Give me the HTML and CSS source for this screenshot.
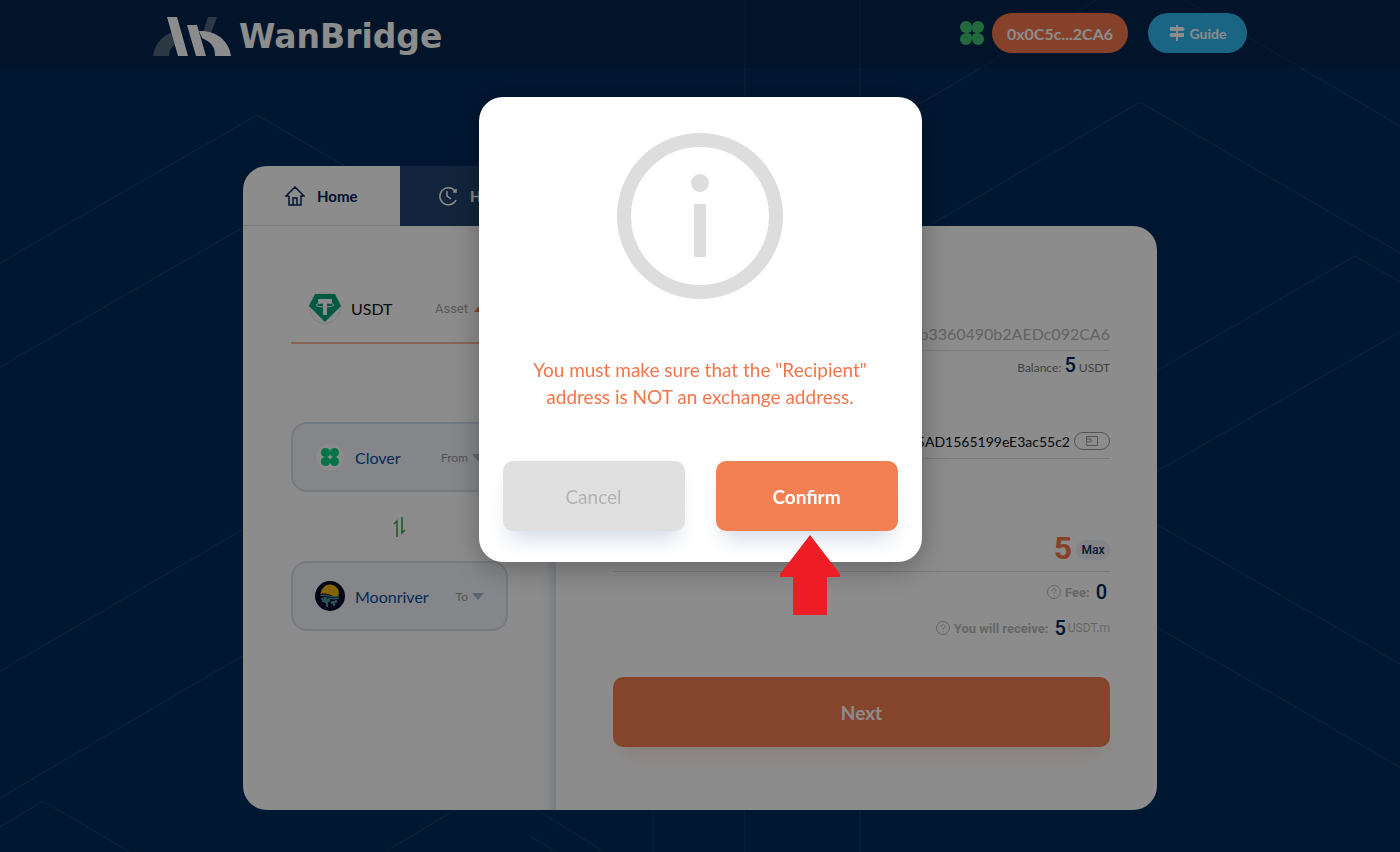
FILE: index.html
```html
<!DOCTYPE html>
<html lang="en">
<head>
    <meta charset="UTF-8">
    <meta name="viewport" content="width=device-width, initial-scale=1.0">
    <title>WanBridge</title>
    <link rel="stylesheet" href="styles.css">
</head>
<body>
    <svg class="bg-lines" viewBox="0 0 1400 852" preserveAspectRatio="xMidYMin slice" aria-hidden="true">
        <path d="M0 263L257 115L345 166M0 367L242 228M0 671L242 530M0 798L242 656M0 827L43 801L130 852M385 852L455 810M537 810L605 852M530 836L557 852"/>
        <path d="M653 810V852M745 0V97M745 810V852M860 0V97M860 810V852"/>
        <path d="M921 103L1097 0M1185 0L1400 126M925 228L1140 102L1400 253M1156 371L1355 256L1400 282M1156 472L1400 332M1156 524L1400 664M1156 627L1400 767"/>
    </svg>

    <header class="header">
        <div class="header-inner">
            <a class="logo" href="#">
                <svg width="80" height="42" viewBox="0 0 80 42" aria-hidden="true">
                    <path class="logo-dim" d="M0 41C2 27 12 18 24 16L28 27C20 29 16 34 16 41ZM55 2H64L56 24L49 21Z"/>
                    <path d="M14 2H24L35 41H25ZM34 10H44L53 41H43ZM46 16C62 15 76 25 78 41H62C62 33 60 28 49 23Z"/>
                </svg>
                <span>WanBridge</span>
            </a>
            <div class="header-right">
                <svg class="clover" width="24" height="24" viewBox="0 0 24 24" aria-hidden="true">
                    <path d="M6 6H18V18H6Z"/>
                    <circle cx="6" cy="6" r="6"/><circle cx="18" cy="6" r="6"/>
                    <circle cx="6" cy="18" r="6"/><circle cx="18" cy="18" r="6"/>
                    <path class="star" d="M12 8L13 11L16 12L13 13L12 16L11 13L8 12L11 11Z"/>
                </svg>
                <button class="pill wallet">0x0C5c...2CA6</button>
                <a class="pill guide" href="#">
                    <svg width="16" height="16" viewBox="0 0 16 16" aria-hidden="true">
                        <path d="M7 0H9V2H14L16 4L14 6H9V8H15V12H9V16H7V12H2L0 10L2 8H7V6H1V2H7Z"/>
                    </svg>
                    Guide
                </a>
            </div>
        </div>
    </header>

    <main class="bridge">
        <nav class="tabs">
            <button class="tab active">
                <svg width="20" height="20" viewBox="0 0 20 20" aria-hidden="true">
                    <path d="M4 10H1L10 1L19 10H16V19H4V10M8 19V12H12V19"/>
                </svg>
                Home
            </button>
            <button class="tab">
                <svg width="20" height="20" viewBox="0 0 20 20" aria-hidden="true">
                    <path d="M18 14A8.500 8.500 0 1 1 17 5M18 3V6H15M9 5V10L13 13"/>
                </svg>
                History
            </button>
        </nav>

        <div class="card">
            <section class="side">
                <button class="asset">
                    <svg width="32" height="32" viewBox="0 0 32 32" aria-hidden="true">
                        <circle cx="16" cy="16" r="15.500" fill="#fff" stroke="#e6e6e6"/>
                        <path d="M6 2H26L32 14L16 30L0 14Z" fill="#00a478"/>
                        <path d="M9 7H23V11H18V23H14V11H9Z" fill="#fff"/>
                        <ellipse cx="16" cy="13" rx="9" ry="2" fill="none" stroke="#fff"/>
                    </svg>
                    <span class="asset-name">USDT</span>
                    <span class="asset-hint">Asset</span>
                    <i class="caret up"></i>
                </button>

                <button class="chain">
                    <svg width="30" height="30" viewBox="0 0 30 30" aria-hidden="true">
                        <circle cx="15" cy="15" r="14.500" fill="#fff" stroke="#eee"/>
                        <g fill="#00d284">
                            <path d="M11 11H19V19H11Z"/>
                            <circle cx="10.500" cy="10.500" r="4.500"/><circle cx="19.500" cy="10.500" r="4.500"/>
                            <circle cx="10.500" cy="19.500" r="4.500"/><circle cx="19.500" cy="19.500" r="4.500"/>
                        </g>
                        <path d="M15 12L16 14L18 15L16 16L15 18L14 16L12 15L14 14Z" fill="#fff"/>
                    </svg>
                    <span class="chain-name">Clover</span>
                    <span class="chain-hint">From</span>
                    <i class="caret"></i>
                </button>

                <button class="swap" aria-label="Swap">
                    <svg width="14" height="22" viewBox="0 0 14 22" aria-hidden="true">
                        <path d="M4 21V5L1 8M9 1V17L12 14"/>
                    </svg>
                </button>

                <button class="chain">
                    <svg width="30" height="30" viewBox="0 0 30 30" aria-hidden="true">
                        <circle cx="15" cy="15" r="15" fill="#070a29"/>
                        <path d="M6 13A9 9 0 0 1 24 12C24 15 21 16 18 15C14 13 10 12 6 13Z" fill="#f2b707"/>
                        <path d="M6 15C12 12 16 18 24 15M6 18C12 14 16 20 24 17" fill="none" stroke="#53cbc9" stroke-width="1"/>
                        <path d="M8 18V21M10 17V22M12 18V26M14 18V21M17 20V23M19 20V25M21 19V22" stroke="#53cbc9" stroke-width="1.500"/>
                    </svg>
                    <span class="chain-name">Moonriver</span>
                    <span class="chain-hint">To</span>
                    <i class="caret"></i>
                </button>
            </section>

            <form class="form">
                <div class="row sender">7b3360490b2AEDc092CA6</div>
                <div class="balance">Balance: <b>5</b> USDT</div>
                <div class="row recipient">
                    <input type="text" aria-label="Recipient" value="5AD1565199eE3ac55c2">
                    <button type="button" class="paste" aria-label="Wallet">
                        <svg width="12" height="10" viewBox="0 0 12 10" aria-hidden="true">
                            <path d="M.5 .5H11.500V9.500H.5V7M.5 3H5V6H.5V.5"/>
                        </svg>
                    </button>
                </div>
                <div class="row amount">
                    <input type="text" aria-label="Amount" value="5">
                    <button type="button" class="max">Max</button>
                </div>
                <div class="info">
                    <svg width="14" height="14" viewBox="0 0 14 14" aria-hidden="true">
                        <circle cx="7" cy="7" r="6.500"/><path d="M5 6C5 3 9 3 9 5.500C9 7 7 7 7 8.500M7 10V11"/>
                    </svg>
                    <span>Fee:</span> <b>0</b>
                </div>
                <div class="info">
                    <svg width="14" height="14" viewBox="0 0 14 14" aria-hidden="true">
                        <circle cx="7" cy="7" r="6.500"/><path d="M5 6C5 3 9 3 9 5.500C9 7 7 7 7 8.500M7 10V11"/>
                    </svg>
                    <span>You will receive:</span> <b>5</b> <small>USDT.m</small>
                </div>
                <button type="button" class="next">Next</button>
            </form>
        </div>
    </main>

    <div class="overlay">
        <div class="modal" role="dialog" aria-modal="true" aria-labelledby="modal-text">
            <svg class="modal-icon" width="168" height="168" viewBox="0 0 168 168" aria-hidden="true">
                <circle cx="84" cy="84" r="76" fill="none" stroke="#ddd" stroke-width="14"/>
                <circle cx="84" cy="51" r="9" fill="#ddd"/>
                <rect x="78" y="72" width="12" height="53" rx="1" fill="#ddd"/>
            </svg>
            <p id="modal-text">You must make sure that the "Recipient" address is NOT an exchange address.</p>
            <div class="modal-buttons">
                <button class="cancel">Cancel</button>
                <div class="confirm-wrap">
                    <button class="confirm">Confirm</button>
                    <svg class="pointer" width="62" height="82" viewBox="0 0 62 82" aria-hidden="true">
                        <path d="M31 1L61 40V43H48V81H14V43H1V40Z"/>
                    </svg>
                </div>
            </div>
        </div>
    </div>
</body>
</html>
```

FILE: styles.css
```css
* {
    box-sizing: border-box;
}
body {
    margin: 0;
    min-height: 100vh;
    background-color: #002a5b;
    font-family: Lato, "Liberation Sans", sans-serif;
}
button, input {
    font-family: inherit;
    border: none;
    padding: 0;
    background: none;
}
a {
    text-decoration: none;
}
.bg-lines {
    position: absolute;
    top: 0;
    left: 0;
    width: 100%;
    height: 100%;
    fill: none;
    stroke: #214265;
    stroke-width: 1;
}

/* header */
.header {
    position: relative;
    height: 68px;
    padding: 0 20px;
    background-color: rgba(6, 34, 66, 0.5);
}
.header-inner {
    display: flex;
    justify-content: space-between;
    max-width: 1094px;
    margin: 0 auto;
    padding-top: 13px;
}
.logo {
    display: flex;
    align-items: center;
    gap: 6px;
    height: 46px;
    color: #fff;
    font: bold 33px "DejaVu Sans", sans-serif;
}
.logo svg {
    fill: #fff;
}
.logo .logo-dim {
    fill: #52667f;
}
.header-right {
    display: flex;
    align-items: center;
    height: 40px;
}
.clover {
    fill: #3ec271;
    margin-right: 8px;
}
.clover .star {
    fill: #02254c;
}
.pill {
    display: flex;
    align-items: center;
    justify-content: center;
    gap: 5px;
    height: 40px;
    border-radius: 20px;
    color: #fff;
    font-weight: bold;
}
.wallet {
    width: 136px;
    margin-right: 20px;
    background-color: #f3774b;
    font-size: 16px;
}
.guide {
    width: 99px;
    background-color: #31b8ef;
    font-size: 14px;
}
.guide svg {
    fill: #fff;
}

/* bridge card */
.bridge {
    position: relative;
    max-width: 914px;
    margin: 0 auto;
    padding: 98px 0 42px;
}
.tabs {
    display: flex;
}
.tab {
    display: flex;
    align-items: center;
    gap: 12px;
    width: 157px;
    height: 60px;
    padding-left: 38px;
    background-color: #20436c;
    color: #fff;
    font-size: 15px;
    font-weight: bold;
}
.tab.active {
    padding-left: 42px;
    border-radius: 24px 0 0 0;
    border-bottom: 1px solid #dcdcdc;
    background-color: #fff;
    color: #04235a;
}
.tab svg {
    fill: none;
    stroke: currentColor;
    stroke-width: 1.5;
}
.card {
    display: flex;
    min-height: 584px;
    border-radius: 0 24px 24px 24px;
    background-color: #fff;
    overflow: hidden;
}
.side {
    width: 313px;
    padding: 48px 48px 0;
    box-shadow: inset -12px 0 12px -8px #d3dae6;
}
.asset {
    display: flex;
    align-items: center;
    width: 100%;
    height: 70px;
    padding: 0 22px 0 18px;
    border-bottom: 2px solid #f9b79c;
}
.asset-name {
    margin-left: 10px;
    color: #111;
    font-size: 16px;
}
.asset-hint {
    margin-left: auto;
    color: #a5a5a5;
    font: 13px Roboto, sans-serif;
}
.caret {
    margin-left: 4px;
    border: 6px solid transparent;
    border-top: 7px solid #a9b8ca;
    border-bottom: 0;
}
.caret.up {
    margin-left: 6px;
    border-top: 0;
    border-bottom: 7px solid #f3774b;
}
.chain {
    display: flex;
    align-items: center;
    width: 100%;
    height: 70px;
    padding: 0 22px;
    border: 2px solid #d5dfeb;
    border-radius: 16px;
    background-color: #f0f4f9;
}
.asset + .chain {
    margin-top: 78px;
}
.chain-name {
    margin-left: 10px;
    color: #0b4c9f;
    font-size: 16px;
}
.chain-hint {
    margin-left: auto;
    color: #999;
    font-size: 12px;
}
.swap {
    display: flex;
    align-items: center;
    justify-content: center;
    width: 100%;
    height: 69px;
}
.swap svg {
    fill: none;
    stroke: #36a33e;
    stroke-width: 1.5;
}

/* form */
.form {
    display: flex;
    flex: 1;
    flex-direction: column;
    padding: 90px 47px 63px 57px;
}
.row {
    display: flex;
    align-items: center;
    justify-content: flex-end;
    height: 35px;
    border-bottom: 1px solid #ddd;
}
.row input {
    flex: 1;
    min-width: 0;
    text-align: right;
}
.sender {
    color: #b4b4b4;
    font-size: 16px;
}
.balance {
    height: 35px;
    color: #777;
    font-size: 12px;
    line-height: 34px;
    text-align: right;
}
.balance b, .info b {
    color: #04235a;
    font: 500 20px Roboto, sans-serif;
}
.recipient {
    margin-top: 38px;
}
.recipient input {
    color: #111;
    font-size: 14px;
}
.paste {
    display: flex;
    align-items: center;
    justify-content: center;
    width: 36px;
    height: 18px;
    margin-left: 4px;
    border: 1px solid #999;
    border-radius: 9px;
}
.paste svg {
    fill: none;
    stroke: #999;
}
.amount {
    height: 48px;
    margin-top: 65px;
}
.amount input {
    color: #f3774b;
    font: bold 32px Roboto, sans-serif;
}
.max {
    width: 34px;
    height: 20px;
    margin: 5px 0 0 4px;
    border-radius: 10px;
    background-color: #edf1f6;
    color: #04235a;
    font: 500 12px Roboto, sans-serif;
}
.info {
    display: flex;
    align-items: center;
    justify-content: flex-end;
    height: 36px;
    color: #bbb;
    font: bold 13px Roboto, sans-serif;
}
.amount + .info {
    margin-top: 2px;
    padding-right: 3px;
}
.info svg {
    margin-right: 4px;
    fill: none;
    stroke: #bbb;
}
.info b {
    margin-left: 6px;
}
.info small {
    margin-left: 2px;
    font-size: 12px;
    font-weight: normal;
}
.next, .cancel, .confirm {
    height: 70px;
    border-radius: 10px;
    font-size: 19px;
}
.next {
    margin-top: auto;
    background-color: #f37f53;
    box-shadow: 0 14px 18px -8px #fbe4db;
    color: #fff;
    font-weight: bold;
}

/* modal */
.overlay {
    position: fixed;
    inset: 0;
    padding: 97px 20px 0;
    background-color: rgba(0, 0, 0, 0.45);
}
.modal {
    max-width: 443px;
    margin: 0 auto;
    padding: 35px 24px 31px;
    border-radius: 24px;
    background-color: #fff;
    box-shadow: 0 6px 30px rgba(0, 0, 0, 0.3);
    text-align: center;
}
.modal-icon {
    display: block;
    margin: 0 auto;
}
.modal p {
    margin: 56px 24px 51px;
    color: #f37549;
    font-size: 19px;
    line-height: 27px;
}
.modal-buttons {
    display: grid;
    grid-template-columns: 1fr 1fr;
    gap: 31px;
}
.cancel, .confirm {
    width: 100%;
    box-shadow: 0 14px 20px -6px #d5ddea;
}
.cancel {
    background-color: #e0e0e0;
    color: #b3b3b3;
}
.confirm {
    background-color: #f37f53;
    color: #fff;
    font-weight: bold;
}
.confirm-wrap {
    position: relative;
}
.pointer {
    position: absolute;
    top: 73px;
    left: 63px;
    fill: #ee1c25;
}
```
